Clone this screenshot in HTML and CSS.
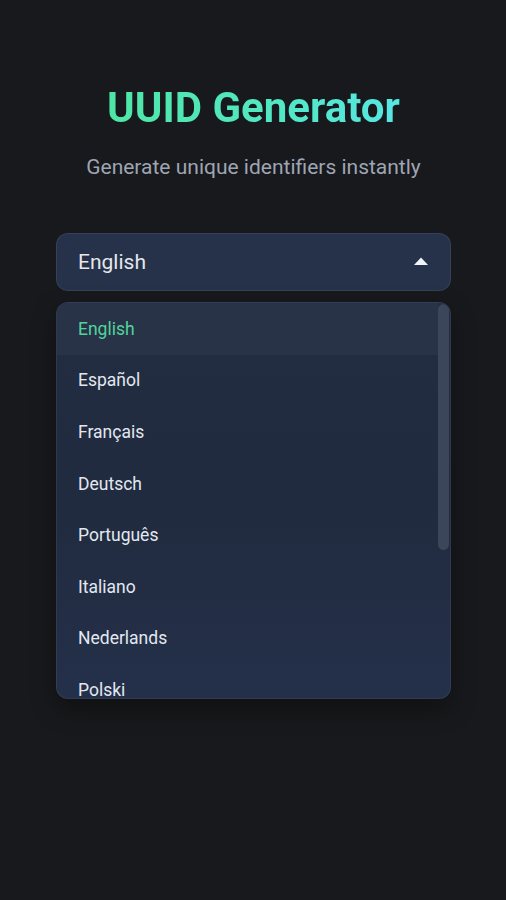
FILE: index.html
```html
<!DOCTYPE html>
<html lang="en">
<head>
<meta charset="utf-8">
<title>UUID Generator</title>
<link rel="stylesheet" href="styles.css">
</head>
<body>
<main class="app">
  <header class="hero">
    <h1 class="title">UUID Generator</h1>
    <p class="subtitle">Generate unique identifiers instantly</p>
  </header>
  <div class="lang">
    <button class="select" type="button">
      <span class="select-value">English</span>
      <svg class="caret" width="14" height="8" viewBox="0 0 14 8"><path d="M0 8 L7 0.5 L14 8 Z" fill="#f1f5f9"/></svg>
    </button>
    <div class="menu">
      <ul class="options">
        <li class="option active">English</li>
        <li class="option">Español</li>
        <li class="option">Français</li>
        <li class="option">Deutsch</li>
        <li class="option">Português</li>
        <li class="option">Italiano</li>
        <li class="option">Nederlands</li>
        <li class="option">Polski</li>
      </ul>
      <div class="scrollbar"><div class="thumb"></div></div>
    </div>
  </div>
</main>
</body>
</html>
```
FILE: styles.css
```css
* { box-sizing: border-box; }
html, body {
  margin: 0;
  height: 100%;
  background: #18191c;
}
body {
  font-family: Roboto, "Noto Sans", sans-serif;
  color: #e5e7eb;
}
.app {
  padding: 83px 55px 0 56px;
}
.hero {
  text-align: center;
}
.title {
  margin: 0;
  font-size: 42px;
  line-height: 50px;
  font-weight: 700;
  background: linear-gradient(90deg, #4ee6a6 0%, #52e8c6 60%, #58e6e4 100%);
  -webkit-background-clip: text;
  background-clip: text;
  color: transparent;
  display: inline-block;
}
.subtitle {
  margin: 20px 0 0;
  font-size: 21px;
  line-height: 28px;
  color: #9ea5b3;
}
.lang {
  margin-top: 52px;
  display: flex;
  flex-direction: column;
  gap: 11px;
}
.select {
  height: 58px;
  width: 100%;
  display: flex;
  align-items: center;
  justify-content: space-between;
  padding: 0 22px 0 21px;
  background: #263249;
  border: 1px solid rgba(148, 163, 184, 0.14);
  border-radius: 12px;
  font-family: inherit;
  font-size: 21px;
  color: #e5e7eb;
}
.caret { display: block; margin-top: -2px; }
.menu {
  height: 397px;
  display: flex;
  overflow: hidden;
  background: linear-gradient(180deg, #232d41 0%, #212b3f 50%, #24304a 100%);
  border: 1px solid rgba(148, 163, 184, 0.12);
  border-radius: 12px;
  box-shadow: 0 10px 24px rgba(0, 0, 0, 0.35);
}
.options {
  list-style: none;
  margin: 0;
  padding: 0;
  flex: 1;
  min-width: 0;
}
.option {
  height: 51.6px;
  display: flex;
  align-items: center;
  padding: 0 21px;
  font-size: 17.5px;
  color: #e2e8f0;
}
.option.active {
  background: #283348;
  color: #52d39c;
}
.scrollbar {
  width: 12px;
  padding: 1px 1px 0 0;
  flex: none;
}
.thumb {
  height: 246px;
  background: #3b465b;
  border-radius: 6px;
}
```
